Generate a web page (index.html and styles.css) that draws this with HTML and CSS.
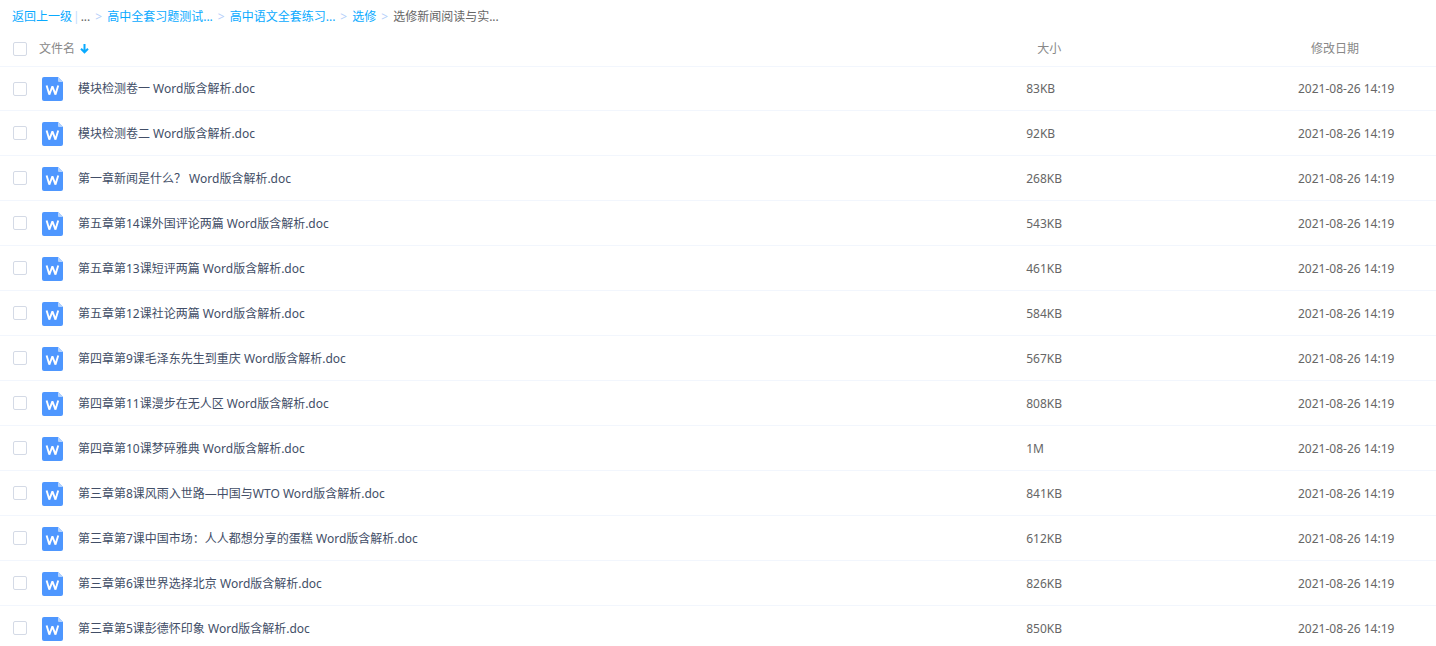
FILE: index.html
```html
<!DOCTYPE html>
<html lang="zh-CN">
<head>
<meta charset="utf-8">
<meta name="viewport" content="width=device-width, initial-scale=1">
<title>选修新闻阅读与实...</title>
<link rel="stylesheet" href="styles.css">
</head>
<body>
<svg class="sprite" aria-hidden="true">
  <symbol id="word" viewBox="0 0 21 24">
    <path fill="#4e97ff" d="M2 0H16L21 5V22a2 2 0 0 1-2 2H2a2 2 0 0 1-2-2V2a2 2 0 0 1 2-2z"/>
    <path fill="#b4d3ff" d="M16 0l5 5h-4a1 1 0 0 1-1-1z"/>
    <path fill="none" stroke="#fff" stroke-width="1.9" stroke-linejoin="bevel" d="M4.6 8.4L7.3 17.6 10.4 9.4 13.5 17.6 16.2 8.4"/>
  </symbol>
</svg>
<nav class="crumbs" aria-label="路径">
  <a href="#">返回上一级</a><span class="bar">|</span><span class="dots">...</span>
  <span class="sep">&gt;</span><a href="#">高中全套习题测试...</a>
  <span class="sep">&gt;</span><a href="#">高中语文全套练习...</a>
  <span class="sep">&gt;</span><a href="#">选修</a>
  <span class="sep">&gt;</span><span class="current">选修新闻阅读与实...</span>
</nav>
<table class="files">
  <thead>
    <tr>
      <th class="name"><div class="cell"><input class="check" type="checkbox" aria-label="全选"><span class="title">文件名</span><svg class="arrow" viewBox="0 0 9 10" aria-hidden="true"><path fill="none" stroke="#09aaff" stroke-width="2" d="M4.5 0V8M1 4.8L4.5 8.3 8 4.8"/></svg></div></th>
      <th class="size">大小</th>
      <th class="date">修改日期</th>
    </tr>
  </thead>
  <tbody id="rows"></tbody>
</table>
<script src="files.js"></script>
</body>
</html>
```
FILE: styles.css
```css
* {
  box-sizing: border-box;
}

body {
  margin: 0;
  background: #fff;
  color: #666;
  font: 12px/18px "Noto Sans", "Noto Sans CJK SC", sans-serif;
}

.sprite {
  position: absolute;
  width: 0;
  height: 0;
}

.crumbs {
  display: flex;
  align-items: center;
  height: 32px;
  padding: 2px 12px 0;
  white-space: nowrap;
}

.crumbs a {
  color: #09aaff;
  text-decoration: none;
}

.bar {
  margin: 0 1px;
  color: #c4dbfe;
}

.sep {
  margin: 0 5px;
  color: #b4cffa;
}

.files {
  width: 100%;
  table-layout: fixed;
  border-collapse: separate;
  border-spacing: 0;
}

.files th,
.files td {
  padding: 0;
  text-align: left;
  font-weight: 400;
  white-space: nowrap;
}

.files th {
  height: 34px;
  color: #888;
}

.files .size {
  width: 19%;
}

.files .date {
  width: 138px;
}

.files th.size {
  padding-left: 12px;
}

.files th.date {
  padding-left: 13px;
}

.files td {
  height: 45px;
  border-bottom: 1px solid #f2f6fd;
}

.files td.size,
.files td.date {
  padding-top: 1px;
}

.files td.size {
  padding-left: 1px;
}

.files tbody tr:first-child td {
  border-top: 1px solid #f2f6fd;
}

.cell {
  display: flex;
  align-items: center;
  padding-left: 13px;
}

.check {
  appearance: none;
  flex: none;
  width: 14px;
  height: 14px;
  margin: 0;
  border: 1px solid #d4dae6;
  border-radius: 2px;
  background: #fff;
}

.check:checked {
  background: #09aaff;
}

.title {
  margin: 0 5px 0 12px;
}

.arrow {
  width: 9px;
  height: 10px;
}

.doc {
  flex: none;
  width: 21px;
  height: 24px;
  margin: 1px 15px 0;
}

.label {
  padding-top: 1px;
  color: #424e67;
}
```
FILE: files.js
```js
const files = [
  ["模块检测卷一 Word版含解析.doc", "83KB"],
  ["模块检测卷二 Word版含解析.doc", "92KB"],
  ["第一章新闻是什么？ Word版含解析.doc", "268KB"],
  ["第五章第14课外国评论两篇 Word版含解析.doc", "543KB"],
  ["第五章第13课短评两篇 Word版含解析.doc", "461KB"],
  ["第五章第12课社论两篇 Word版含解析.doc", "584KB"],
  ["第四章第9课毛泽东先生到重庆 Word版含解析.doc", "567KB"],
  ["第四章第11课漫步在无人区 Word版含解析.doc", "808KB"],
  ["第四章第10课梦碎雅典 Word版含解析.doc", "1M"],
  ["第三章第8课风雨入世路—中国与WTO Word版含解析.doc", "841KB"],
  ["第三章第7课中国市场：人人都想分享的蛋糕 Word版含解析.doc", "612KB"],
  ["第三章第6课世界选择北京 Word版含解析.doc", "826KB"],
  ["第三章第5课彭德怀印象 Word版含解析.doc", "850KB"]
];

document.getElementById("rows").innerHTML = files.map(([name, size], i) => `
  <tr>
    <td class="name"><div class="cell"><input class="check" type="checkbox" id="file-${i}"><svg class="doc" aria-hidden="true"><use href="#word"/></svg><label class="label" for="file-${i}">${name}</label></div></td>
    <td class="size">${size}</td>
    <td class="date">2021-08-26 14:19</td>
  </tr>`).join("");
```
